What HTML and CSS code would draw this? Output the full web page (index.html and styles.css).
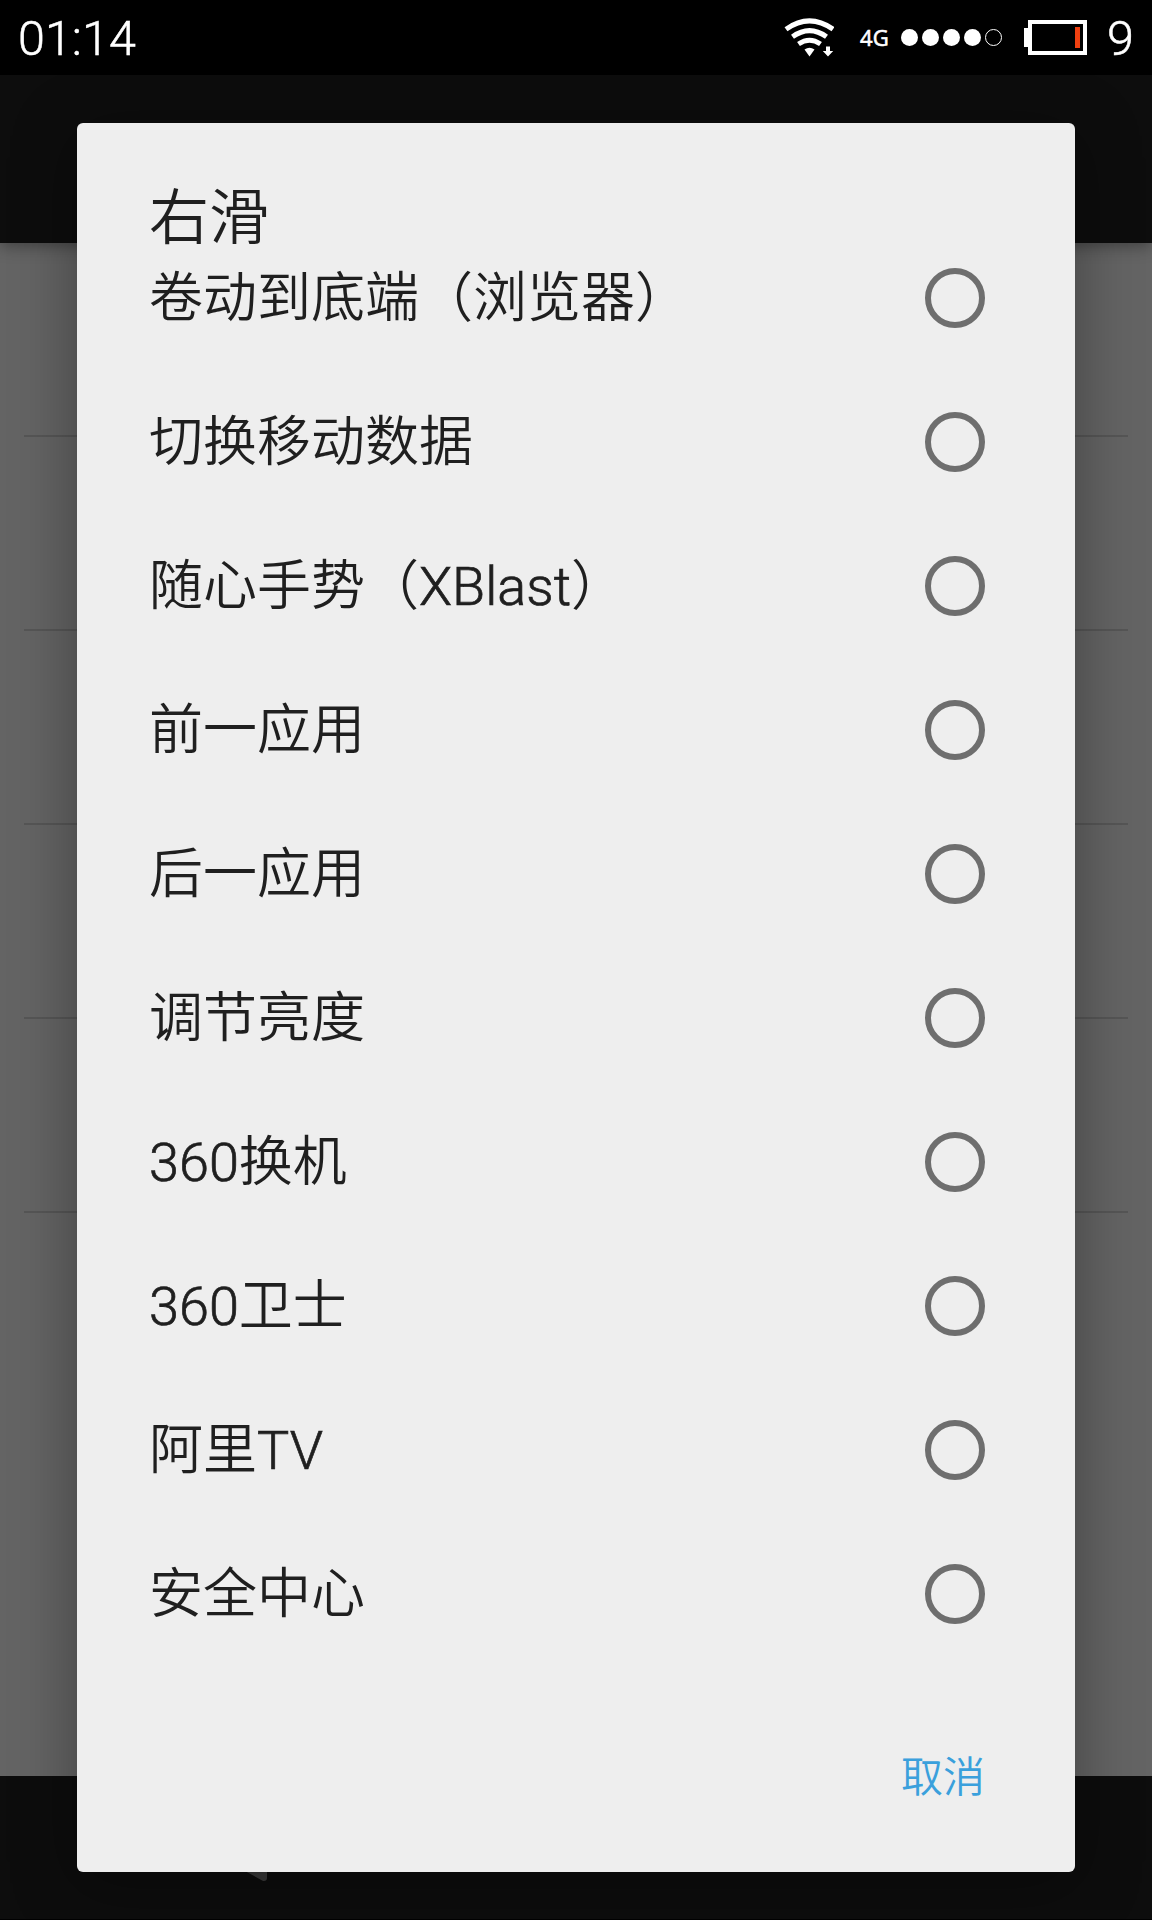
FILE: index.html
```html
<!DOCTYPE html>
<html lang="zh-CN">
<head>
<meta charset="utf-8">
<title>右滑</title>
<link rel="stylesheet" href="styles.css">
</head>
<body>
<div class="screen">
  <header class="status-bar">
    <span class="clock">01:14</span>
    <svg class="wifi" width="50" height="40" viewBox="0 0 50 40">
      <g fill="none" stroke="#fff" stroke-width="5">
        <path d="M2 11.2Q25.500 -5.500 49 11.200"/>
        <path d="M8.500 18.700Q25.500 6.500 42.500 18.700"/>
        <path d="M14.500 26Q25.500 18.500 36.500 26"/>
      </g>
      <path fill="#fff" d="M20.500 31.500Q25.500 28 30.500 31.500L25.500 38.500Z"/>
      <path fill="#fff" d="M42 28.500h4v4.500h3.200L44 38.500 38.800 33H42Z"/>
    </svg>
    <span class="network">4G</span>
    <div class="signal">
      <i class="dot"></i><i class="dot"></i><i class="dot"></i><i class="dot"></i><i class="dot dot-empty"></i>
    </div>
    <svg class="battery" width="63" height="36" viewBox="0 0 63 36">
      <path fill="#fff" d="M0 8h5v19H0Z"/>
      <rect x="6" y="2" width="55" height="31" fill="none" stroke="#fff" stroke-width="4"/>
      <path fill="#f04010" d="M51 7h5v21h-5Z"/>
    </svg>
    <span class="level">9</span>
  </header>
  <div class="action-bar"></div>
  <main class="page">
    <div class="setting"></div>
    <div class="setting"></div>
    <div class="setting"></div>
    <div class="setting"></div>
    <div class="setting"></div>
  </main>
  <nav class="nav-bar">
    <svg class="back" width="64" height="68" viewBox="0 0 64 68">
      <path d="M60 4V64L5 34Z" fill="#3b3b3b" stroke="#3b3b3b" stroke-width="6" stroke-linejoin="round"/>
    </svg>
  </nav>
  <section class="dialog">
    <h1 class="title">右滑</h1>
    <ul class="options">
      <li class="option"><span class="label">卷动到底端（浏览器）</span><i class="radio"></i></li>
      <li class="option"><span class="label">切换移动数据</span><i class="radio"></i></li>
      <li class="option"><span class="label">随心手势（<span class="latin">XBlast</span>）</span><i class="radio"></i></li>
      <li class="option"><span class="label">前一应用</span><i class="radio"></i></li>
      <li class="option"><span class="label">后一应用</span><i class="radio"></i></li>
      <li class="option"><span class="label">调节亮度</span><i class="radio"></i></li>
      <li class="option"><span class="label"><span class="latin">360</span>换机</span><i class="radio"></i></li>
      <li class="option"><span class="label"><span class="latin">360</span>卫士</span><i class="radio"></i></li>
      <li class="option"><span class="label">阿里<span class="latin">TV</span></span><i class="radio"></i></li>
      <li class="option"><span class="label">安全中心</span><i class="radio"></i></li>
    </ul>
    <div class="actions"><button class="cancel">取消</button></div>
  </section>
</div>
</body>
</html>
```

FILE: styles.css
```css
* { box-sizing: border-box; }

body {
  margin: 0;
  background: #000;
  font-family: Roboto, "Noto Sans CJK SC", sans-serif;
  font-weight: 350;
}

.screen {
  position: relative;
  display: flex;
  flex-direction: column;
  width: 1152px;
  height: 1920px;
  overflow: hidden;
}

.status-bar {
  display: flex;
  align-items: center;
  flex: none;
  height: 75px;
  padding: 0 18px;
  background: #000;
  color: #fff;
}

.clock, .level {
  font-size: 48.5px;
  font-weight: 300;
  line-height: 75px;
  padding-top: 2px;
  -webkit-text-stroke: .5px #fff;
}

.clock { flex: 1; }

.wifi { margin-right: 26px; }

.network {
  width: 30px;
  margin-right: 11px;
  font: 500 22px/75px "Open Sans", sans-serif;
  -webkit-text-stroke: .6px #fff;
}

.signal { display: flex; gap: 4px; margin-right: 22px; }

.dot {
  width: 17px;
  height: 17px;
  border-radius: 50%;
  background: #fff;
}

.dot-empty { background: none; border: 1.500px solid #fff; }

.battery { margin-right: 20px; }

.action-bar {
  position: relative;
  flex: none;
  height: 168px;
  background: #0d0d0d;
  box-shadow: 0 2px 16px rgba(0, 0, 0, .4);
}

.page {
  flex: 1;
  padding: 0 24px;
  background: #646464;
}

.setting {
  height: 194px;
  border-bottom: 2px solid #565656;
}

.nav-bar {
  position: relative;
  flex: none;
  height: 144px;
  padding: 38px 0 0 204px;
  background: #0d0d0d;
  border-bottom: 1px solid #000;
}

.back { display: block; }

.dialog {
  position: absolute;
  left: 77px;
  top: 123px;
  display: flex;
  flex-direction: column;
  width: 998px;
  height: 1749px;
  padding: 49px 90px 0 72px;
  border-radius: 6px;
  background: #eee;
  color: #1f1f1f;
  box-shadow: 0 12px 64px rgba(0, 0, 0, .36);
}

.title {
  height: 54px;
  margin: 0;
  font-size: 60px;
  font-weight: 350;
  line-height: 94px;
}

.options { margin: 0; padding: 0; list-style: none; }

.option {
  display: flex;
  align-items: center;
  justify-content: space-between;
  height: 144px;
  font-size: 54px;
  line-height: 80px;
}

.label { padding-top: 2px; }

.latin {
  font-weight: 300;
  -webkit-text-stroke: .7px #1f1f1f;
}

.radio {
  width: 60px;
  height: 60px;
  border: 6px solid #6e6e6e;
  border-radius: 50%;
}

.actions {
  display: flex;
  justify-content: flex-end;
  margin-top: 81px;
}

.cancel {
  padding: 0;
  border: 0;
  background: none;
  color: #3aa0dc;
  font: inherit;
  font-size: 42px;
  line-height: 62px;
}
```
